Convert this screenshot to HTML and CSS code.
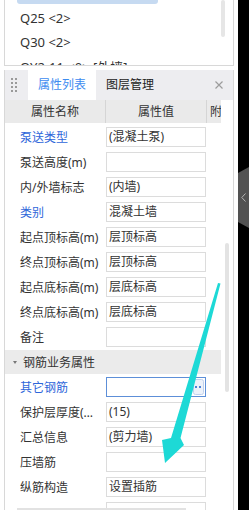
FILE: index.html
```html
<!DOCTYPE html>
<html lang="zh">

<head>
    <meta charset="UTF-8">
    <meta name="viewport" content="width=device-width, initial-scale=1.0">
    <title>属性列表</title>
    <link rel="stylesheet" href="styles.css">
</head>

<body>
    <div class="screen">
        <div class="workspace">
            <div class="list-panel">
                <ul class="layer-list">
                    <li class="selected"></li>
                    <li>Q25 &lt;2&gt;</li>
                    <li>Q30 &lt;2&gt;</li>
                    <li>QY2-11 &lt;0&gt; [外墙]</li>
                </ul>
                <div class="list-scroll"></div>
            </div>

            <div class="prop-panel">
                <div class="tabs">
                    <svg class="grip" width="6" height="14" viewBox="0 0 6 14">
                        <rect x="0" y="0" width="2" height="2" />
                        <rect x="4" y="0" width="2" height="2" />
                        <rect x="0" y="4" width="2" height="2" />
                        <rect x="4" y="4" width="2" height="2" />
                        <rect x="0" y="8" width="2" height="2" />
                        <rect x="4" y="8" width="2" height="2" />
                        <rect x="0" y="12" width="2" height="2" />
                        <rect x="4" y="12" width="2" height="2" />
                    </svg>
                    <span class="tab active">属性列表</span>
                    <span class="tab">图层管理</span>
                    <svg class="close" width="8" height="8" viewBox="0 0 8 8">
                        <path d="M0.5 0.5 L7.5 7.5 M7.5 0.5 L0.5 7.5" />
                    </svg>
                </div>

                <div class="grid-wrap">
                    <div class="grid">
                        <div class="thead">
                            <div class="th">属性名称</div>
                            <div class="th">属性值</div>
                            <div class="th">附加</div>
                        </div>
                        <div class="row"><div class="name link">泵送类型</div><div class="value"><div class="box">(混凝土泵)</div></div></div>
                        <div class="row"><div class="name">泵送高度(m)</div><div class="value"><div class="box"></div></div></div>
                        <div class="row"><div class="name">内/外墙标志</div><div class="value"><div class="box">(内墙)</div></div></div>
                        <div class="row"><div class="name link">类别</div><div class="value"><div class="box">混凝土墙</div></div></div>
                        <div class="row"><div class="name">起点顶标高(m)</div><div class="value"><div class="box">层顶标高</div></div></div>
                        <div class="row"><div class="name">终点顶标高(m)</div><div class="value"><div class="box">层顶标高</div></div></div>
                        <div class="row"><div class="name">起点底标高(m)</div><div class="value"><div class="box">层底标高</div></div></div>
                        <div class="row"><div class="name">终点底标高(m)</div><div class="value"><div class="box">层底标高</div></div></div>
                        <div class="row"><div class="name">备注</div><div class="value"><div class="box"></div></div></div>
                        <div class="section"><span class="caret"></span>钢筋业务属性</div>
                        <div class="row">
                            <div class="name link">其它钢筋</div>
                            <div class="value">
                                <div class="box focus">
                                    <svg class="more" width="11" height="16" viewBox="0 0 11 16">
                                        <rect x="0.5" y="0.5" width="10" height="15" rx="2" class="more-bg" />
                                        <rect x="2" y="7" width="2" height="2" class="more-dot" />
                                        <rect x="6" y="7" width="2" height="2" class="more-dot" />
                                    </svg>
                                </div>
                            </div>
                        </div>
                        <div class="row"><div class="name">保护层厚度(mm)</div><div class="value"><div class="box">(15)</div></div></div>
                        <div class="row"><div class="name">汇总信息</div><div class="value"><div class="box">(剪力墙)</div></div></div>
                        <div class="row"><div class="name">压墙筋</div><div class="value"><div class="box"></div></div></div>
                        <div class="row"><div class="name">纵筋构造</div><div class="value"><div class="box">设置插筋</div></div></div>
                        <div class="row"><div class="name"></div><div class="value"><div class="box"></div></div></div>
                    </div>
                    <div class="vscroll"><div class="thumb"></div></div>
                    <div class="hscroll"></div>
                </div>
            </div>
        </div>

        <div class="side">
            <div class="side-tab">
                <svg width="5" height="9" viewBox="0 0 5 9">
                    <path d="M4.5 0.5 L0.8 4.5 L4.5 8.5" />
                </svg>
            </div>
        </div>

        <!-- annotation arrow drawn over the screenshot -->
        <svg class="arrow" width="249" height="510" viewBox="0 0 249 510">
            <polygon points="218,283 220.5,283.5 180.5,438 184,445 165,463 162,440 171,438" />
        </svg>
    </div>
</body>

</html>
```

FILE: styles.css
```css
body {
    margin: 0;
    font-family: "Noto Sans", "Noto Sans CJK SC", sans-serif;
    font-size: 12px;
    color: #333;
    background-color: #fff;
}

.screen {
    position: relative;
    display: flex;
    width: 249px;
    height: 510px;
    overflow: hidden;
}

.workspace {
    display: flex;
    flex-direction: column;
    width: 230px;
    padding: 0 4px;
}

/* top list */
.list-panel {
    display: flex;
    height: 65px;
    border: 1px solid #d8d8d8;
    border-top: none;
    overflow: hidden;
}

.layer-list {
    flex: 1;
    list-style: none;
    margin: -18px 0 0;
    padding: 0 0 0 12px;
    font-size: 13px;
}

.layer-list li {
    height: 22px;
    line-height: 22px;
    margin-bottom: 2.5px;
    padding-left: 3px;
    white-space: nowrap;
}

.layer-list li.selected {
    width: 138px;
    background-color: #c6daf1;
    border-radius: 3px;
}

.list-scroll {
    width: 4px;
    height: 37px;
    margin-right: 8px;
    background-color: #e6e6e6;
    border-radius: 2px;
}

/* property panel */
.prop-panel {
    flex: 1;
    display: flex;
    flex-direction: column;
    margin-top: 4px;
    border-left: 1px solid #d8d8d8;
    border-right: 1px solid #d8d8d8;
    min-height: 0;
}

.tabs {
    display: flex;
    align-items: center;
    height: 30px;
    background-color: #ededf0;
}

.grip {
    fill: #9a9a9a;
    margin: 0 11px 0 6px;
}

.tab {
    height: 30px;
    line-height: 30px;
    padding: 0 10px;
    font-size: 12px;
    color: #222;
}

.tab.active {
    background-color: #fff;
    color: #3d8cf0;
}

.close {
    margin-left: auto;
    margin-right: 10px;
    stroke: #9c9c9c;
    stroke-width: 1.2;
}

.grid-wrap {
    position: relative;
    flex: 1;
    display: flex;
    min-height: 0;
    overflow: hidden;
}

.grid {
    width: 216px;
    overflow: hidden;
}

.thead {
    display: flex;
    width: 233px;
    height: 23px;
    margin-bottom: 2px;
    background-color: #eaeaea;
}

.th {
    width: 100px;
    line-height: 23px;
    text-align: center;
    border-right: 1px solid #d5d5d5;
    white-space: nowrap;
    overflow: hidden;
}

.th:last-child {
    width: 30px;
    border-right: none;
}

.row {
    display: flex;
    height: 25px;
}

.name {
    width: 81px;
    padding: 0 5px 0 15px;
    line-height: 25px;
    white-space: nowrap;
    overflow: hidden;
    text-overflow: ellipsis;
}

.name.link {
    color: #2e66da;
}

.value {
    width: 101px;
    padding-top: 2px;
}

.box {
    position: relative;
    box-sizing: border-box;
    width: 100px;
    height: 20px;
    padding-left: 2px;
    line-height: 18px;
    border: 1px solid #dcdcdc;
    white-space: nowrap;
}

.box.focus {
    border-color: #5d8fd8;
}

.more {
    position: absolute;
    right: 1px;
    top: 1px;
}

.more-bg {
    fill: #edf2fa;
    stroke: #c0d1ec;
}

.more-dot {
    fill: #4f82d4;
}

.section {
    display: flex;
    align-items: center;
    height: 24px;
    margin-bottom: 1px;
    background-color: #ebebeb;
}

.caret {
    width: 0;
    height: 0;
    margin: 0 6px 0 8px;
    border-left: 2.5px solid transparent;
    border-right: 2.5px solid transparent;
    border-top: 3px solid #777;
}

.vscroll {
    width: 12px;
}

.thumb {
    width: 4px;
    height: 149px;
    margin: 143px 0 0 4px;
    background-color: #e3e3e3;
    border-radius: 2px;
}

.hscroll {
    position: absolute;
    left: 12px;
    bottom: 0;
    width: 169px;
    height: 2px;
    background-color: #e2e2e2;
}

/* right dock strip */
.side {
    width: 11px;
    background-color: #000;
    margin-left: auto;
}

.side-tab {
    display: flex;
    align-items: center;
    justify-content: center;
    height: 61px;
    margin-top: 167px;
    background-color: #525252;
    clip-path: polygon(0 6px, 100% 0, 100% 100%, 0 calc(100% - 6px));
}

.side-tab svg {
    fill: none;
    stroke: #b5b5b5;
    stroke-width: 1;
}

.arrow {
    position: absolute;
    left: 0;
    top: 0;
    pointer-events: none;
}

.arrow polygon {
    fill: #1dd9d6;
}
```
